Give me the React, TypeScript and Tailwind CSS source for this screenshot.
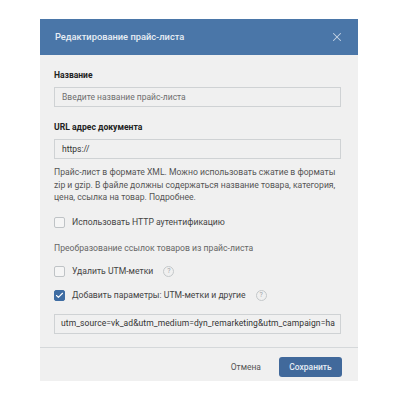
import { Check, X } from "lucide-react";

const font = "font-['Roboto','Liberation_Sans',sans-serif]";

function Field({ value, dark, small }: { value: string; dark?: boolean; small?: boolean }) {
  return (
    <div
      className={`h-[20px] border border-[#cfd2d4] bg-[#f0f0f0] flex items-center overflow-hidden whitespace-nowrap text-[8.5px] ${
        small ? "pl-[6px] tracking-[0.09px]" : "pl-[7px]"
      } ${dark ? "text-[#333]" : "text-[#6f6f6f]"}`}
    >
      {value}
    </div>
  );
}

function CheckRow({ label, on, hint }: { label: string; on?: boolean; hint?: boolean }) {
  return (
    <div className="flex items-center h-[12px]">
      <span
        className={`w-[11px] h-[11px] rounded-[2px] border flex items-center justify-center shrink-0 ${
          on ? "bg-[#3f6da3] border-[#3f6da3]" : "bg-[#f5f5f5] border-[#bfc3c6]"
        }`}
      >
        {on && <Check size={9} strokeWidth={3} className="text-white" />}
      </span>
      <span className="ml-[7px] text-[8.65px] text-[#444] whitespace-nowrap">{label}</span>
      {hint && (
        <span className="ml-[10px] w-[11px] h-[11px] rounded-full border border-[#c4c8ca] text-[#a0a4a8] text-[7px] flex items-center justify-center">
          ?
        </span>
      )}
    </div>
  );
}

export default function App() {
  return (
    <div className={`w-[400px] h-[400px] bg-white pt-[19px] pl-[40px] ${font}`}>
      <div className="w-[318px] h-[362px] bg-[#f0f0f0] flex flex-col">
        {/* Header */}
        <div className="h-[36px] bg-[#4a76a8] flex items-center justify-between pl-[15px] pr-[14px] shrink-0">
          <span className="text-[9.3px] font-medium text-[#e8eef5]">Редактирование прайс-листа</span>
          <X size={14} strokeWidth={1.75} className="text-[#c5d4e5]" />
        </div>

        {/* Body */}
        <div className="flex-1 pl-[14px] pr-[17px] pt-[14px] flex flex-col">
          <div className="text-[8.5px] font-bold text-[#222] leading-[12px] mb-[6px]">Название</div>
          <Field value="Введите название прайс-листа" />

          <div className="text-[8.6px] font-bold text-[#222] leading-[12px] mt-[14px] mb-[6px]">URL адрес документа</div>
          <Field value="https://" dark />

          <p className="mt-[7px] text-[8.65px] leading-[12.5px] text-[#555]">
            Прайс-лист в формате XML. Можно использовать сжатие в форматы zip и gzip. В файле должны содержаться название товара, категория, цена, ссылка на товар. Подробнее.
          </p>

          <div className="mt-[13px]">
            <CheckRow label="Использовать HTTP аутентификацию" />
          </div>

          <div className="mt-[13px] text-[8.65px] leading-[12px] text-[#666]">Преобразование ссылок товаров из прайс-листа</div>

          <div className="mt-[12px]">
            <CheckRow label="Удалить UTM-метки" hint />
          </div>
          <div className="mt-[12px]">
            <CheckRow label="Добавить параметры: UTM-метки и другие" on hint />
          </div>

          <div className="mt-[12px]">
            <Field value="utm_source=vk_ad&utm_medium=dyn_remarketing&utm_campaign=ha" dark small />
          </div>
        </div>

        {/* Footer */}
        <div className="h-[34px] border-t border-[#d5d8da] flex items-center justify-end pr-[16px] pt-[5px] shrink-0">
          <span className="text-[8.5px] text-[#555] mr-[18px]">Отмена</span>
          <button className="w-[63px] h-[20px] rounded-[3px] bg-[#41699b] text-[#e6edf5] text-[8.5px] font-medium">
            Сохранить
          </button>
        </div>
      </div>
    </div>
  );
}
